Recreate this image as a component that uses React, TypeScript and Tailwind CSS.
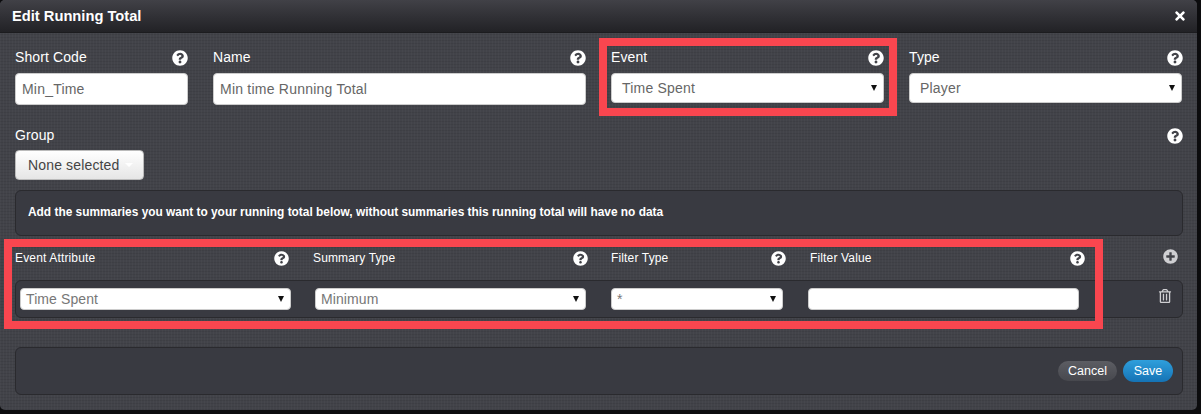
import { FaPlusCircle, FaQuestionCircle, FaRegTrashAlt, FaTimes } from "react-icons/fa";

function Help() {
  return <FaQuestionCircle size={16} className="text-white shrink-0" />;
}

function Arrow() {
  return (
    <svg width="6" height="6" viewBox="0 0 6 6" className="shrink-0">
      <path d="M0 0h6L3 6z" fill="#111" />
    </svg>
  );
}

function FieldHead({ label }: { label: string }) {
  return (
    <div className="flex h-[17px] items-center justify-between text-[14px] tracking-[0.1px] text-white">
      <span>{label}</span>
      <Help />
    </div>
  );
}

function BigSelect({ value }: { value: string }) {
  return (
    <div className="flex h-[30px] items-center justify-between rounded-[4px] border border-[#ccc] bg-white pl-[10px] pr-[6px] text-[14px] tracking-[0.2px] text-[#666]">
      <span>{value}</span>
      <Arrow />
    </div>
  );
}

function SmallSelect({ value, width }: { value: string; width: string }) {
  return (
    <div className={`flex h-[22px] items-center justify-between rounded-[4px] border border-[#ccc] bg-white pl-[5px] pr-[6px] text-[14px] tracking-[0.1px] text-[#777] ${width}`}>
      <span>{value}</span>
      <Arrow />
    </div>
  );
}

function ColHead({ label, width }: { label: string; width: string }) {
  return (
    <div className={`flex items-center justify-between text-[12px] tracking-[0.15px] text-white ${width}`}>
      <span>{label}</span>
      <FaQuestionCircle size={15} className="text-white" />
    </div>
  );
}

export default function App() {
  return (
    <div className="relative h-[414px] w-[1201px] overflow-hidden bg-[#0c0c0e] font-['Liberation_Sans',Arial,sans-serif]">
      <div className="h-[410px] w-[1197px] overflow-hidden rounded-[5px] bg-[#424349] bg-[repeating-linear-gradient(90deg,#ffffff06_0,#ffffff06_1px,transparent_1px,transparent_3px),repeating-linear-gradient(0deg,#00000012_0,#00000012_1px,transparent_1px,transparent_3px)]">
        <div className="flex h-[33px] items-center justify-between border-b border-[#1c1c1f] bg-gradient-to-b from-[#414147] to-[#222226] pl-[12px] pr-[10px]">
          <span className="text-[14.7px] font-bold text-white">Edit Running Total</span>
          <FaTimes size={14} className="text-white" />
        </div>

        <div className="pl-[15px] pr-[14px] pt-[16px]">
          <div className="flex gap-[25px]">
            <div className="w-[173px]">
              <FieldHead label="Short Code" />
              <input readOnly value="Min_Time" className="mt-[7px] h-[32px] w-full rounded-[4px] border border-[#ccc] bg-white px-[6px] text-[14px] tracking-[0.2px] text-[#666]" />
            </div>
            <div className="w-[373px]">
              <FieldHead label="Name" />
              <input readOnly value="Min time Running Total" className="mt-[7px] h-[32px] w-full rounded-[4px] border border-[#ccc] bg-white px-[6px] text-[14px] tracking-[0.23px] text-[#666]" />
            </div>
            <div className="w-[273px]">
              <FieldHead label="Event" />
              <div className="mt-[7px]">
                <BigSelect value="Time Spent" />
              </div>
            </div>
            <div className="w-[274px]">
              <FieldHead label="Type" />
              <div className="mt-[7px] pr-px">
                <BigSelect value="Player" />
              </div>
            </div>
          </div>

          <div className="mt-[22px]">
            <FieldHead label="Group" />
            <button type="button" className="mt-[6px] flex h-[30px] w-[129px] items-center rounded-[4px] border border-[#bbb] bg-gradient-to-b from-white to-[#e6e6e6] pl-[12px] text-[14px] tracking-[0.15px] text-[#444]">
              None selected
              <span className="ml-[6px] h-0 w-0 border-x-[4px] border-t-[4px] border-x-transparent border-t-white" />
            </button>
          </div>

          <div className="mt-[10px] flex h-[46px] items-center rounded-[6px] border border-[#2a2a2e] bg-[#393a41] pl-[12px] text-[11.9px] font-bold text-white">
            Add the summaries you want to your running total below, without summaries this running total will have no data
          </div>

          <div className="mt-[13px] flex h-[31px] items-start">
            <ColHead label="Event Attribute" width="w-[274px]" />
            <ColHead label="Summary Type" width="ml-[24px] w-[275px]" />
            <ColHead label="Filter Type" width="ml-[23px] w-[175px]" />
            <ColHead label="Filter Value" width="ml-[24px] w-[275px]" />
            <FaPlusCircle size={15} className="ml-auto mr-[5px] text-[#cfcfd2]" />
          </div>

          <div className="flex h-[38px] items-start rounded-[6px] border border-[#2a2a2e] bg-[#393a41] pl-[4px] pt-[7px]">
            <SmallSelect value="Time Spent" width="w-[271px]" />
            <div className="ml-[24px]">
              <SmallSelect value="Minimum" width="w-[271px]" />
            </div>
            <div className="ml-[25px]">
              <SmallSelect value="*" width="w-[172px]" />
            </div>
            <input readOnly value="" className="ml-[25px] h-[22px] w-[271px] rounded-[4px] border border-[#ccc] bg-white" />
            <FaRegTrashAlt size={14} className="ml-[79px] mt-[1px] text-[#cfcfd2]" />
          </div>

          <div className="mt-[29px] flex h-[48px] items-center justify-end gap-[6px] rounded-[6px] border border-[#2a2a2e] bg-[#393a41] pr-[9px]">
            <button type="button" className="h-[20px] w-[59px] rounded-full bg-gradient-to-b from-[#5c5d63] to-[#47484e] text-[12.5px] text-white">
              Cancel
            </button>
            <button type="button" className="h-[22px] w-[50px] rounded-full bg-gradient-to-b from-[#2f9fdc] to-[#1573b5] text-[12.5px] text-white">
              Save
            </button>
          </div>
        </div>
      </div>

      <div className="absolute left-[599px] top-[38px] h-[78px] w-[298px] border-[8px] border-[#f9464f]" />
      <div className="absolute left-[4px] top-[239px] h-[90px] w-[1099px] border-[8px] border-[#f9464f]" />
    </div>
  );
}
